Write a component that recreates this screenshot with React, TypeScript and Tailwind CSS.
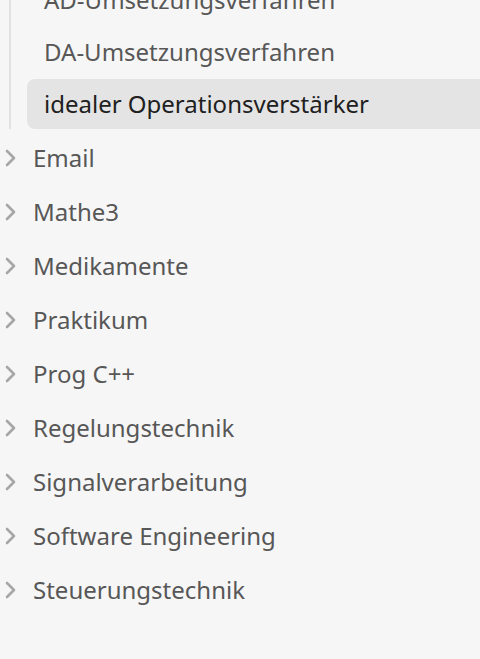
const SUB = ["AD-Umsetzungsverfahren", "DA-Umsetzungsverfahren", "idealer Operationsverstärker"];
const SELECTED = "idealer Operationsverstärker";

const FOLDERS = [
  "Email",
  "Mathe3",
  "Medikamente",
  "Praktikum",
  "Prog C++",
  "Regelungstechnik",
  "Signalverarbeitung",
  "Software Engineering",
  "Steuerungstechnik",
];

function Chevron() {
  return (
    <svg width="14" height="20" viewBox="0 0 14 20" className="shrink-0">
      <path d="M3 3 L10 10 L3 17" fill="none" stroke="#a6a6a6" strokeWidth="2.6" strokeLinecap="round" strokeLinejoin="round" />
    </svg>
  );
}

export default function App() {
  return (
    <div
      className="h-[659px] w-[480px] overflow-hidden bg-[#f6f6f6] text-[24px] leading-none"
      style={{ fontFamily: '"Noto Sans", "Open Sans", sans-serif' }}
    >
      <div className="-mt-[25px] ml-[9px] flex flex-col gap-[2px] border-l-2 border-[#e2e2e2] pl-[16px]">
        {SUB.map((s) => (
          <div
            key={s}
            className={
              s === SELECTED
                ? "flex h-[50px] items-center rounded-l-lg bg-[#e4e4e4] pl-[17px] text-[#202020]"
                : "flex h-[50px] items-center pl-[17px] text-[#575757]"
            }
          >
            {s}
          </div>
        ))}
      </div>
      <div className="mt-[2px] flex flex-col">
        {FOLDERS.map((f) => (
          <div key={f} className="flex h-[54px] items-center gap-[15px] pl-[4px] text-[#575757]">
            <Chevron />
            <span>{f}</span>
          </div>
        ))}
      </div>
    </div>
  );
}
